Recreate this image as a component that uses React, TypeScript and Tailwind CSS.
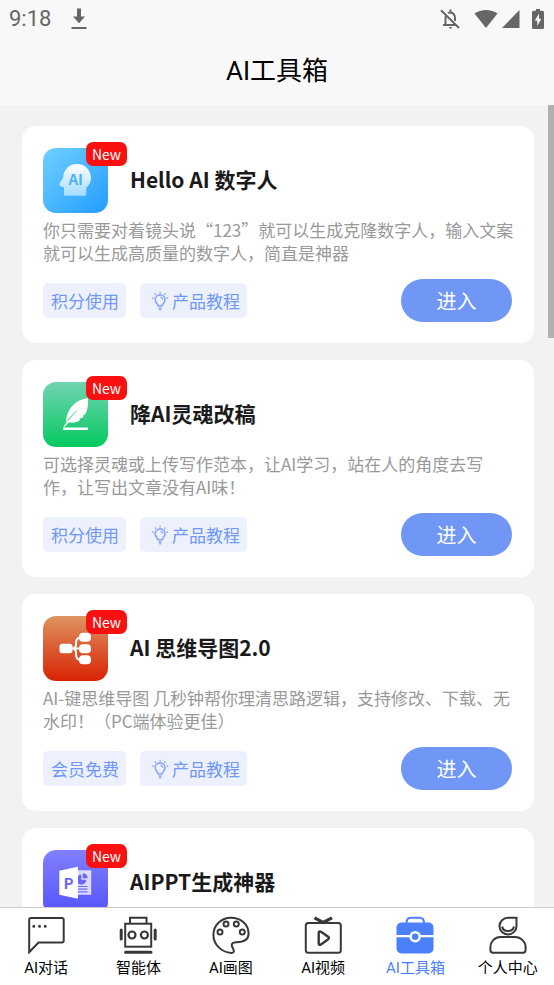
import type { ReactNode } from 'react'
import clsx from 'clsx'

type Tool = {
  title: string
  description?: string
  tag?: string
  icon: ReactNode
}

function DigitalHumanIcon() {
  return (
    <svg viewBox="0 0 65 65" className="size-full" aria-hidden="true">
      <defs>
        <linearGradient id="human-bg" x1="0" y1="0" x2="1" y2="1">
          <stop offset="0" stopColor="#6fd0ff" />
          <stop offset="1" stopColor="#249dff" />
        </linearGradient>
        <linearGradient id="human-head" x1="0" y1="0" x2="0" y2="1">
          <stop offset="0" stopColor="#ffffff" />
          <stop offset="1" stopColor="#a4dbff" />
        </linearGradient>
      </defs>
      <rect width="65" height="65" rx="13" fill="url(#human-bg)" />
      <path
        d="M34 16C42 16 48 22 48 30C48 34 46 37.500 43.500 39.500L43 46.500Q43 47.700 42 47.700H22Q21 47.700 21 46.500V39.500Q19.500 38.500 17.500 38.300Q15.700 37.300 16.500 35.500L20.300 29.500C20.300 22 26 16 34 16Z"
        fill="url(#human-head)"
      />
      <text x="25.500" y="36.500" fontSize="15" fontWeight="700" fill="#4db2fb" className="font-['Noto_Sans_CJK_SC',sans-serif]">
        AI
      </text>
    </svg>
  )
}

function FeatherIcon() {
  return (
    <svg viewBox="0 0 65 65" className="size-full" aria-hidden="true">
      <defs>
        <linearGradient id="feather-bg" x1="0" y1="0" x2="0" y2="1">
          <stop offset="0" stopColor="#72d4b1" />
          <stop offset="1" stopColor="#05c960" />
        </linearGradient>
      </defs>
      <rect width="65" height="65" rx="13" fill="url(#feather-bg)" />
      <path
        d="M45 16C33 17.500 25.500 26 23.500 35.500L22.700 41C26 36 30 31 35.500 27C31 32 26.500 37 20.500 44.500L21.500 45L26 40.300C29.500 41.200 34 40.500 37 38L36.500 36.500L40 35.500L40.500 33L42.500 32C44.500 28 45.500 22 45 16Z"
        fill="#fff"
      />
      <rect x="20" y="45.500" width="25" height="2.500" fill="#fff" />
    </svg>
  )
}

function MindMapIcon() {
  return (
    <svg viewBox="0 0 65 65" className="size-full" aria-hidden="true">
      <defs>
        <linearGradient id="mind-bg" x1="0" y1="0" x2="0" y2="1">
          <stop offset="0" stopColor="#dd9460" />
          <stop offset="1" stopColor="#d92204" />
        </linearGradient>
      </defs>
      <rect width="65" height="65" rx="13" fill="url(#mind-bg)" />
      <path
        d="M29 32.500H37M37 21.500C33.500 22 33 24 33 27V29Q32.500 32 30 32.500Q32.500 33 33 36V38C33 41 33.500 43.500 37 44"
        fill="none"
        stroke="#fff"
        strokeWidth="2"
      />
      <g fill="#fff">
        <rect x="16.500" y="27.700" width="13" height="9.600" rx="2.800" />
        <rect x="36" y="16.700" width="12" height="9" rx="4" />
        <rect x="36" y="28.200" width="12" height="9" rx="4" />
        <rect x="36" y="39.300" width="12" height="9" rx="4" />
      </g>
    </svg>
  )
}

function SlidesIcon() {
  return (
    <svg viewBox="0 0 65 65" className="size-full" aria-hidden="true">
      <defs>
        <linearGradient id="slides-bg" x1="0" y1="0" x2="0" y2="1">
          <stop offset="0" stopColor="#8280ff" />
          <stop offset="1" stopColor="#5452fb" />
        </linearGradient>
      </defs>
      <rect width="65" height="65" rx="13" fill="url(#slides-bg)" />
      <rect x="34" y="20.300" width="14.200" height="24.400" fill="#dcdcff" />
      <path d="M38.300 29.700V24.700A5 5 0 1 0 43.300 29.700Z" fill="#6a68fc" />
      <path d="M39.700 23.200A5 5 0 0 1 44.700 28.200H39.700Z" fill="#6a68fc" />
      <path d="M35 36.500H44.500M35 39.200H44.500M35 41.900H44.500" stroke="#6a68fc" strokeWidth="1.200" />
      <path d="M16.300 20.700L35 16.700V48.700L16.300 44.700Z" fill="#fff" />
      <text x="20.500" y="38.500" fontSize="15" fontWeight="700" fill="#6a68fc" className="font-['Noto_Sans_CJK_SC',sans-serif]">
        P
      </text>
    </svg>
  )
}

const tools: Tool[] = [
  {
    title: 'Hello AI 数字人',
    description: '你只需要对着镜头说“123”就可以生成克隆数字人，输入文案就可以生成高质量的数字人，简直是神器',
    tag: '积分使用',
    icon: <DigitalHumanIcon />,
  },
  {
    title: '降AI灵魂改稿',
    description: '可选择灵魂或上传写作范本，让AI学习，站在人的角度去写作，让写出文章没有AI味！',
    tag: '积分使用',
    icon: <FeatherIcon />,
  },
  {
    title: 'AI 思维导图2.0',
    description: 'AI-键思维导图 几秒钟帮你理清思路逻辑，支持修改、下载、无水印！（PC端体验更佳）',
    tag: '会员免费',
    icon: <MindMapIcon />,
  },
  {
    title: 'AIPPT生成神器',
    icon: <SlidesIcon />,
  },
]

const tabs: { label: string; active?: boolean; icon: ReactNode }[] = [
  {
    label: 'AI对话',
    icon: (
      <>
        <path d="M4 2H35Q36.700 2 36.700 3.700V24.800Q36.700 26.500 35 26.500H11.500L2.200 36.300V3.700Q2.200 2 4 2Z" />
        <path d="M6.800 10.200h.01M12.500 10.200h.01M18.200 10.200h.01" strokeWidth="3" strokeLinecap="round" />
      </>
    ),
  },
  {
    label: '智能体',
    icon: (
      <>
        <rect x="6.200" y="7.700" width="26" height="23" />
        <path d="M11 7.500V1.800H27.500V7.500" />
        <circle cx="13" cy="19" r="3.500" strokeWidth="2.200" />
        <circle cx="25.400" cy="19" r="3.500" strokeWidth="2.200" />
        <path d="M2.200 14V23M36.200 14V23M6.500 36.200H32" strokeWidth="3" strokeLinecap="round" />
      </>
    ),
  },
  {
    label: 'AI画图',
    icon: (
      <>
        <path d="M19 1.700C9 1.700 1.400 9.500 1.400 19C1.400 28 9 36.500 19.500 36.900C22.500 37 22.300 35 21 32.500C18.500 28.500 20 26.200 24.500 26.200C33 26.200 36.600 22.500 36.600 17.500C36.300 8 28.500 1.700 19 1.700Z" />
        <circle cx="8" cy="16" r="2.500" />
        <circle cx="14" cy="8" r="2.500" />
        <circle cx="24.300" cy="8" r="2.500" />
        <circle cx="30.300" cy="16" r="2.500" />
      </>
    ),
  },
  {
    label: 'AI视频',
    icon: (
      <>
        <rect x="1.800" y="7" width="35" height="29.800" rx="2.500" />
        <path d="M10.500 1.800L19.200 6.500L28 1.800" strokeWidth="3.200" />
        <path d="M14.700 17.200Q14.700 14.500 17 15.800L24.200 20.800Q25.700 22 24.200 23.200L17 28.400Q14.700 29.700 14.700 27Z" strokeWidth="2.400" />
      </>
    ),
  },
  {
    label: 'AI工具箱',
    active: true,
    icon: (
      <>
        <path d="M10.500 7C10.500 3.500 12 1.700 15 1.700H23.500C26.500 1.700 28 3.500 28 7" />
        <rect x=".5" y="6.500" width="37" height="31" rx="5" fill="currentColor" stroke="none" />
        <path d="M0 20.200H38" stroke="#fff" strokeWidth="2.200" />
        <circle cx="19.200" cy="20.700" r="4.500" fill="currentColor" stroke="#fff" strokeWidth="2.600" />
      </>
    ),
  },
  {
    label: '个人中心',
    icon: (
      <>
        <path d="M19 1.800H27.500V10A8.500 8.300 0 1 1 19 1.800Z" />
        <path d="M13.200 10.500C14 16.500 23.800 16.500 25 10.500" />
        <path d="M11.500 21H26C32 21 36.600 26 36.600 31V34Q36.600 36.700 34 36.700H4Q1.400 36.700 1.400 34V31C1.400 26 5.500 21 11.500 21Z" />
      </>
    ),
  },
]

function StatusBar() {
  return (
    <div className="flex h-[38px] items-center pr-2 pl-[9px] text-[#666]">
      <span className="font-[Roboto,sans-serif] text-[22px] leading-6">9:18</span>
      <svg viewBox="0 0 16 22" className="ml-5 h-[22px] w-4" fill="currentColor" aria-hidden="true">
        <path d="M6 0.500H10V8.500H14L8 15.200L2 8.500H6Z" />
        <rect x="0.500" y="19" width="15" height="2" />
      </svg>
      <div className="ml-auto flex items-center">
        <svg viewBox="0 0 20 20" className="size-5" fill="none" stroke="currentColor" strokeWidth="2" aria-hidden="true">
          <path d="M1 1.200L19 19M3 16H15.500M5.500 15.500V9Q5.500 7 6.300 6M15 12V8.500Q14.500 4 10.500 3.500Q8.800 3.500 8 4M10.500 0.500V3.500" />
          <path d="M8.800 18H12.200Q11.800 19.700 10.500 19.700T8.800 18Z" fill="currentColor" stroke="none" />
        </svg>
        <svg viewBox="0 0 24 20" className="ml-[14px] h-5 w-6" fill="currentColor" aria-hidden="true">
          <path d="M0.500 4.500C7 -0.300 17 -0.300 23.500 4.500L12 19Z" />
        </svg>
        <svg viewBox="0 0 18 20" className="ml-1 h-5 w-[18px]" fill="currentColor" aria-hidden="true">
          <path d="M17.500 1V19H0Z" />
        </svg>
        <svg viewBox="0 0 12 20" className="mr-[2px] ml-3 h-5 w-3" fill="currentColor" aria-hidden="true">
          <path d="M4 0H8V1.800H10.500Q12 1.800 12 3.300V18.500Q12 20 10.500 20H1.500Q0 20 0 18.500V3.300Q0 1.800 1.500 1.800H4Z" />
          <path d="M7 4.500L2.800 11.700H5.300V17L9.300 9.700H7Z" fill="#f8f8f8" />
        </svg>
      </div>
    </div>
  )
}

function BulbIcon() {
  return (
    <svg viewBox="0 0 18 20" className="mr-[3px] ml-[3px] h-5 w-[18px]" fill="none" stroke="#86a5f7" strokeWidth="1.600" aria-hidden="true">
      <path d="M7 14.800C7 12.800 4.200 11.800 4.200 8.800A4.900 4.900 0 0 1 14 8.800C14 11.800 11.200 12.800 11.200 14.800Z" />
      <path d="M7.500 17H10.700M8.200 18.700H10" />
      <path d="M9.100 0.800V2.600M3.800 2.300L5 3.800M14.400 2.300L13.200 3.800M1 6.800L2.700 7.400M17.200 6.800L15.500 7.400M9.500 6.200Q11.600 6.600 11.700 8.700" strokeWidth="1.300" />
    </svg>
  )
}

function ToolCard({ tool }: { tool: Tool }) {
  return (
    <article className="rounded-[14px] bg-white pt-[22px] pr-[18px] pb-[21px] pl-[21px]">
      <div className="flex items-center gap-[22px]">
        <div className="relative size-[65px] shrink-0">
          {tool.icon}
          <span className="absolute -top-[6px] -right-[19px] flex h-6 w-[41px] items-center justify-center rounded-[7px] bg-[#fa1010] text-sm text-white">
            New
          </span>
        </div>
        <h2 className="pb-[2px] text-[21px] font-bold text-[#1a1a1a]">{tool.title}</h2>
      </div>

      {tool.description && (
        <p className="mt-[5px] text-[17px] leading-[23px] text-[#999]">{tool.description}</p>
      )}

      {tool.tag && (
        <div className="mt-[15px] mr-1 flex items-center gap-[14px] text-[17px] text-[#7097f6]">
          <span className="flex h-[35px] items-center rounded-[5px] bg-[#edf1fe] pr-[7px] pl-2">{tool.tag}</span>
          <a href="#tutorial" className="flex h-[35px] items-center rounded-[5px] bg-[#edf1fe] pr-[7px] pl-2">
            <BulbIcon />
            产品教程
          </a>
          <button type="button" className="ml-auto h-[43px] w-[111px] rounded-full bg-[#7097f6] text-xl text-white">
            进入
          </button>
        </div>
      )}
    </article>
  )
}

export default function App() {
  return (
    <div
      lang="zh-CN"
      className="flex h-screen flex-col bg-[#f2f2f2] font-['Noto_Sans_CJK_SC',sans-serif]"
    >
      {/* Header */}
      <header className="bg-[#f8f8f8]">
        <StatusBar />
        <h1 className="flex h-[67px] items-center justify-center font-[Roboto,'Noto_Sans_CJK_SC',sans-serif] text-[26px] text-black">
          AI工具箱
        </h1>
      </header>

      {/* Tool list */}
      <main className="relative min-h-0 flex-1 overflow-hidden">
        <div className="flex flex-col gap-[17px] pt-[21px] pr-5 pl-[22px]">
          {tools.map((tool) => (
            <ToolCard key={tool.title} tool={tool} />
          ))}
        </div>
        <div className="absolute top-0 right-0 h-[29%] w-[6px] bg-[#b0b0b0]" />
      </main>

      {/* Tab bar */}
      <nav className="grid grid-cols-6 border-t border-[#ccc] bg-white pt-2 pb-[6px] font-[Roboto,'Noto_Sans_CJK_SC',sans-serif]">
        {tabs.map((tab) => (
          <a
            key={tab.label}
            href="#"
            className={clsx('flex flex-col items-center gap-[3px]', tab.active ? 'text-[#4b80fc]' : 'text-black')}
          >
            <svg
              viewBox="0 0 38 38"
              className={clsx('size-[38px]', !tab.active && 'text-[#383838]')}
              fill="none"
              stroke="currentColor"
              strokeWidth="2"
              aria-hidden="true"
            >
              {tab.icon}
            </svg>
            <span className="text-[15px] leading-[22px] whitespace-nowrap">{tab.label}</span>
          </a>
        ))}
      </nav>
    </div>
  )
}
